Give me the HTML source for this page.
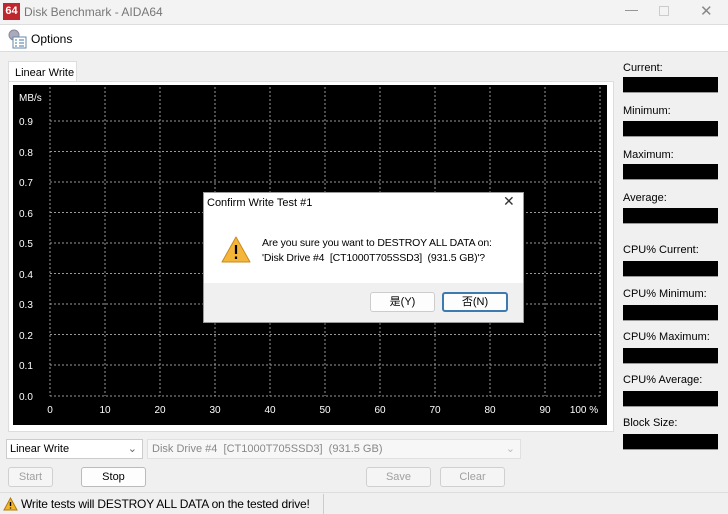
<!DOCTYPE html>
<html><head><meta charset="utf-8"><style>
*{margin:0;padding:0;box-sizing:border-box}
body{width:728px;height:514px;overflow:hidden;background:#f0f0f0;font-family:"Liberation Sans","Noto Sans CJK KR",sans-serif;font-size:11px;color:#000;position:relative}
.a{position:absolute}
.lbl{position:absolute;left:623px;font-size:11px}
.box{position:absolute;left:623px;width:95px;height:16px;background:#000;border-bottom:1px solid #999}
.btn{position:absolute;height:20px;border:1px solid #d0d0d0;border-radius:3px;background:#f5f5f5;text-align:center;line-height:18px;color:#a0a0a0}
</style></head><body>
<div class="a" style="left:0;top:0;width:728px;height:24px;background:#f3f3f3"></div>
<div class="a" style="left:3px;top:3px;width:17px;height:17px;background:#c0262d;color:#fff;font-weight:bold;font-size:11px;line-height:17px;text-align:center">64</div>
<div class="a" style="left:24px;top:5px;font-size:12px;color:#777">Disk Benchmark - AIDA64</div>
<div class="a" style="left:625px;top:2px;color:#888;font-size:13px">—</div>
<div class="a" style="left:659px;top:6px;width:10px;height:10px;border:1px solid #ccc"></div>
<div class="a" style="left:700px;top:2px;color:#888;font-size:15px">✕</div>
<div class="a" style="left:0;top:24px;width:728px;height:28px;background:#fff;border-top:1px solid #ddd;border-bottom:1px solid #ddd"></div>
<svg class="a" style="left:7px;top:28px" width="22" height="22"><circle cx="7" cy="7" r="5" fill="#aab" stroke="#889"/><rect x="6" y="9" width="13" height="11" fill="#fff" stroke="#6688aa"/><path d="M8 12h2M12 12h5M8 15h2M12 15h5M8 18h2M12 18h5" stroke="#4477aa"/></svg>
<div class="a" style="left:31px;top:32px;font-size:12px">Options</div>
<div class="a" style="left:8px;top:61px;width:69px;height:21px;background:#fff;border:1px solid #ddd;border-bottom:none;padding:5px 0 0 6px">Linear Write</div>
<div class="a" style="left:8px;top:81px;width:606px;height:351px;background:#fff;border:1px solid #ddd"></div>
<svg class="a" style="left:13px;top:85px" width="594" height="340" font-family="Liberation Sans" font-size="10" fill="#fff">
<rect width="594" height="340" fill="#000"/>
<g stroke="#999" stroke-dasharray="2,2" stroke-width="1">
<path d="M37 36H587M37 66.5H587M37 97H587M37 127.5H587M37 158H587M37 188.5H587M37 219H587M37 249.5H587M37 280H587M37 311H587"/>
<path d="M37 2V311M92 2V311M147 2V311M202 2V311M257 2V311M312 2V311M367 2V311M422 2V311M477 2V311M532 2V311M587 2V311"/>
</g>
<text x="6" y="16">MB/s</text>
<text x="6" y="40">0.9</text><text x="6" y="71">0.8</text><text x="6" y="101">0.7</text><text x="6" y="132">0.6</text><text x="6" y="162">0.5</text><text x="6" y="193">0.4</text><text x="6" y="223">0.3</text><text x="6" y="254">0.2</text><text x="6" y="284">0.1</text><text x="6" y="315">0.0</text>
<g text-anchor="middle"><text x="37" y="328">0</text><text x="92" y="328">10</text><text x="147" y="328">20</text><text x="202" y="328">30</text><text x="257" y="328">40</text><text x="312" y="328">50</text><text x="367" y="328">60</text><text x="422" y="328">70</text><text x="477" y="328">80</text><text x="532" y="328">90</text><text x="571" y="328">100 %</text></g>
</svg>
<div class="lbl" style="top:62px">Current:</div><div class="box" style="top:77px"></div>
<div class="lbl" style="top:105px">Minimum:</div><div class="box" style="top:121px"></div>
<div class="lbl" style="top:149px">Maximum:</div><div class="box" style="top:164px"></div>
<div class="lbl" style="top:192px">Average:</div><div class="box" style="top:208px"></div>
<div class="lbl" style="top:244px">CPU% Current:</div><div class="box" style="top:261px"></div>
<div class="lbl" style="top:288px">CPU% Minimum:</div><div class="box" style="top:305px"></div>
<div class="lbl" style="top:331px">CPU% Maximum:</div><div class="box" style="top:348px"></div>
<div class="lbl" style="top:374px">CPU% Average:</div><div class="box" style="top:391px"></div>
<div class="lbl" style="top:417px">Block Size:</div><div class="box" style="top:434px"></div>
<div class="a" style="left:6px;top:439px;width:137px;height:20px;background:#fff;border:1px solid #ccc;padding:3px 0 0 3px">Linear Write<span style="position:absolute;right:5px;top:2px;color:#666">⌄</span></div>
<div class="a" style="left:147px;top:439px;width:374px;height:20px;background:#f7f7f7;border:1px solid #e0e0e0;padding:3px 0 0 4px;color:#888">Disk Drive #4&nbsp; [CT1000T705SSD3]&nbsp; (931.5 GB)<span style="position:absolute;right:5px;top:2px;color:#bbb">⌄</span></div>
<div class="btn" style="left:8px;top:467px;width:45px">Start</div>
<div class="btn" style="left:81px;top:467px;width:65px;background:#fdfdfd;border-color:#bbb;color:#000">Stop</div>
<div class="btn" style="left:366px;top:467px;width:65px">Save</div>
<div class="btn" style="left:440px;top:467px;width:65px">Clear</div>
<div class="a" style="left:0;top:492px;width:728px;height:22px;background:#f0f0f0;border-top:1px solid #ddd"></div>
<div class="a" style="left:323px;top:494px;width:1px;height:20px;background:#ccc"></div>
<svg class="a" style="left:3px;top:497px" width="15" height="14"><path d="M7.5 1L14 13H1Z" fill="#f2b52b" stroke="#b07a10"/><path d="M7.5 5v4M7.5 10.5v1" stroke="#000" stroke-width="1.4"/></svg>
<div class="a" style="left:21px;top:497px;font-size:12px;letter-spacing:-0.2px">Write tests will DESTROY ALL DATA on the tested drive!</div>
<div class="a" style="left:203px;top:192px;width:321px;height:131px;background:#fff;border:1px solid #999;box-shadow:0 2px 8px rgba(0,0,0,.4)"></div>
<div class="a" style="left:207px;top:197px;font-size:11px">Confirm Write Test #1</div>
<div class="a" style="left:503px;top:193px;font-size:14px;color:#333">✕</div>
<div class="a" style="left:204px;top:283px;width:319px;height:39px;background:#f0f0f0"></div>
<svg class="a" style="left:220px;top:235px" width="32" height="29"><path d="M16 2L30 27H2Z" fill="#f3b63a" stroke="#c88a1e" stroke-linejoin="round"/><path d="M16 10v9M16 21.5v2.5" stroke="#000" stroke-width="2.2"/></svg>
<div class="a" style="left:262px;top:236px;line-height:15px;font-size:10.5px;letter-spacing:-0.15px">Are you sure you want to DESTROY ALL DATA on:<br>'Disk Drive #4&nbsp; [CT1000T705SSD3]&nbsp; (931.5 GB)'?</div>
<div class="a" style="left:370px;top:292px;width:65px;height:20px;border:1px solid #ccc;border-radius:3px;background:#fdfdfd;text-align:center;line-height:18px">是(Y)</div>
<div class="a" style="left:442px;top:292px;width:66px;height:20px;border:2px solid #3d7ab0;border-radius:3px;background:#fdfdfd;text-align:center;line-height:16px">否(N)</div>
</body></html>
